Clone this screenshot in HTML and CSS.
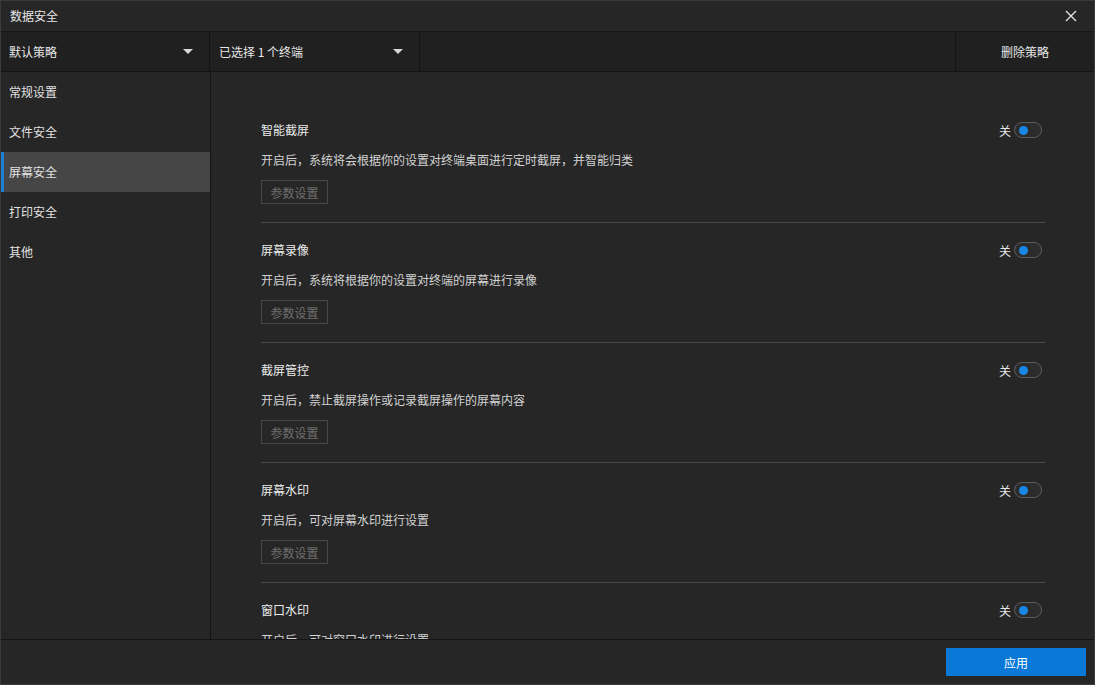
FILE: index.html
```html
<!DOCTYPE html>
<html lang="zh-CN">
<head>
<meta charset="utf-8">
<title>数据安全</title>
<link rel="stylesheet" href="styles.css">
</head>
<body>
<div class="window">
  <div class="titlebar">
    <span class="title">数据安全</span>
    <svg class="close" width="12" height="12" viewBox="0 0 12 12"><path d="M1 1L11 11M11 1L1 11" stroke="#e6e6e6" stroke-width="1.3" fill="none"/></svg>
  </div>
  <div class="toolbar">
    <div class="cell select policy"><span>默认策略</span><span class="caret"></span></div>
    <div class="cell select terminal"><span>已选择 1 个终端</span><span class="caret"></span></div>
    <div class="cell spacer"></div>
    <div class="cell delete">删除策略</div>
  </div>
  <div class="main">
    <nav class="sidebar">
      <div class="nav-item">常规设置</div>
      <div class="nav-item">文件安全</div>
      <div class="nav-item active">屏幕安全</div>
      <div class="nav-item">打印安全</div>
      <div class="nav-item">其他</div>
    </nav>
    <div class="content">
      <div class="section">
        <div class="row"><span class="name">智能截屏</span><span class="switch-wrap">关<span class="switch"><span class="knob"></span></span></span></div>
        <div class="desc">开启后，系统将会根据你的设置对终端桌面进行定时截屏，并智能归类</div>
        <button class="param">参数设置</button>
      </div>
      <div class="section">
        <div class="row"><span class="name">屏幕录像</span><span class="switch-wrap">关<span class="switch"><span class="knob"></span></span></span></div>
        <div class="desc">开启后，系统将根据你的设置对终端的屏幕进行录像</div>
        <button class="param">参数设置</button>
      </div>
      <div class="section">
        <div class="row"><span class="name">截屏管控</span><span class="switch-wrap">关<span class="switch"><span class="knob"></span></span></span></div>
        <div class="desc">开启后，禁止截屏操作或记录截屏操作的屏幕内容</div>
        <button class="param">参数设置</button>
      </div>
      <div class="section">
        <div class="row"><span class="name">屏幕水印</span><span class="switch-wrap">关<span class="switch"><span class="knob"></span></span></span></div>
        <div class="desc">开启后，可对屏幕水印进行设置</div>
        <button class="param">参数设置</button>
      </div>
      <div class="section">
        <div class="row"><span class="name">窗口水印</span><span class="switch-wrap">关<span class="switch"><span class="knob"></span></span></span></div>
        <div class="desc">开启后，可对窗口水印进行设置</div>
        <button class="param">参数设置</button>
      </div>
    </div>
  </div>
  <div class="footer">
    <button class="apply">应用</button>
  </div>
</div>
</body>
</html>
```
FILE: styles.css
```css
* { box-sizing: border-box; }
html, body { margin: 0; padding: 0; background: #262626; }
body {
  font-family: "Noto Sans CJK SC", "Noto Sans", sans-serif;
  font-size: 12px;
  color: #e2e2e2;
}
.window {
  width: 1095px;
  height: 685px;
  border: 1px solid #3a3a3a;
  background: #262626;
  display: flex;
  flex-direction: column;
  overflow: hidden;
}
.titlebar {
  height: 31px;
  flex: none;
  display: flex;
  align-items: center;
  justify-content: space-between;
  padding: 0 17px 0 9px;
  background: #262626;
  border-bottom: 1px solid #161616;
}
.title { color: #e6e6e6; line-height: 20px; }
.close { display: block; }
.toolbar {
  height: 40px;
  flex: none;
  display: flex;
  background: #202020;
  border-bottom: 1px solid #141414;
}
.cell {
  height: 100%;
  display: flex;
  align-items: center;
  border-right: 1px solid #141414;
  color: #e6e6e6;
}
.select { justify-content: space-between; padding: 0 16px 0 8px; }
.policy { width: 209px; }
.terminal { width: 210px; padding-left: 9px; }
.spacer { flex: 1; }
.delete { width: 138px; border-right: none; justify-content: center; }
.caret {
  width: 0; height: 0;
  border-left: 5px solid transparent;
  border-right: 5px solid transparent;
  border-top: 5px solid #d8d8d8;
}
.main { flex: 1; display: flex; min-height: 0; }
.sidebar {
  width: 210px;
  flex: none;
  border-right: 1px solid #141414;
  background: #262626;
}
.nav-item {
  height: 40px;
  line-height: 40px;
  padding-left: 8px;
  color: #e2e2e2;
}
.nav-item.active {
  background: #464646;
  border-left: 3px solid #1b7fd3;
  padding-left: 5px;
}
.content {
  flex: 1;
  overflow: hidden;
  padding: 48px 49px 0 50px;
}
.section {
  padding: 0 0 18px;
  border-bottom: 1px solid #484848;
  margin-bottom: 17px;
}
.row {
  display: flex;
  justify-content: space-between;
  align-items: center;
  height: 20px;
}
.name { color: #ebebeb; line-height: 20px; }
.switch-wrap { display: flex; align-items: center; gap: 3px; color: #e6e6e6; padding-right: 3px; }
.switch {
  width: 28px;
  height: 16px;
  border: 1px solid #5c5c5c;
  border-radius: 8px;
  background: #2c2c2c;
  display: flex;
  align-items: center;
  padding-left: 4px;
}
.knob {
  width: 9px; height: 9px;
  border-radius: 50%;
  background: #1a86e6;
}
.desc { margin-top: 10px; line-height: 20px; color: #d2d2d2; }
.param {
  margin-top: 10px;
  display: block;
  height: 24px;
  width: 67px;
  padding: 0;
  font: inherit;
  color: #6f6f6f;
  background: transparent;
  border: 1px solid #484848;
}
.footer {
  height: 45px;
  flex: none;
  border-top: 1px solid #141414;
  display: flex;
  justify-content: flex-end;
  align-items: flex-start;
  padding: 8px 8px 0 0;
  background: #262626;
}
.apply {
  width: 140px;
  height: 28px;
  border: none;
  background: #0a78d7;
  color: #ffffff;
  font: inherit;
  font-size: 12px;
}
```
